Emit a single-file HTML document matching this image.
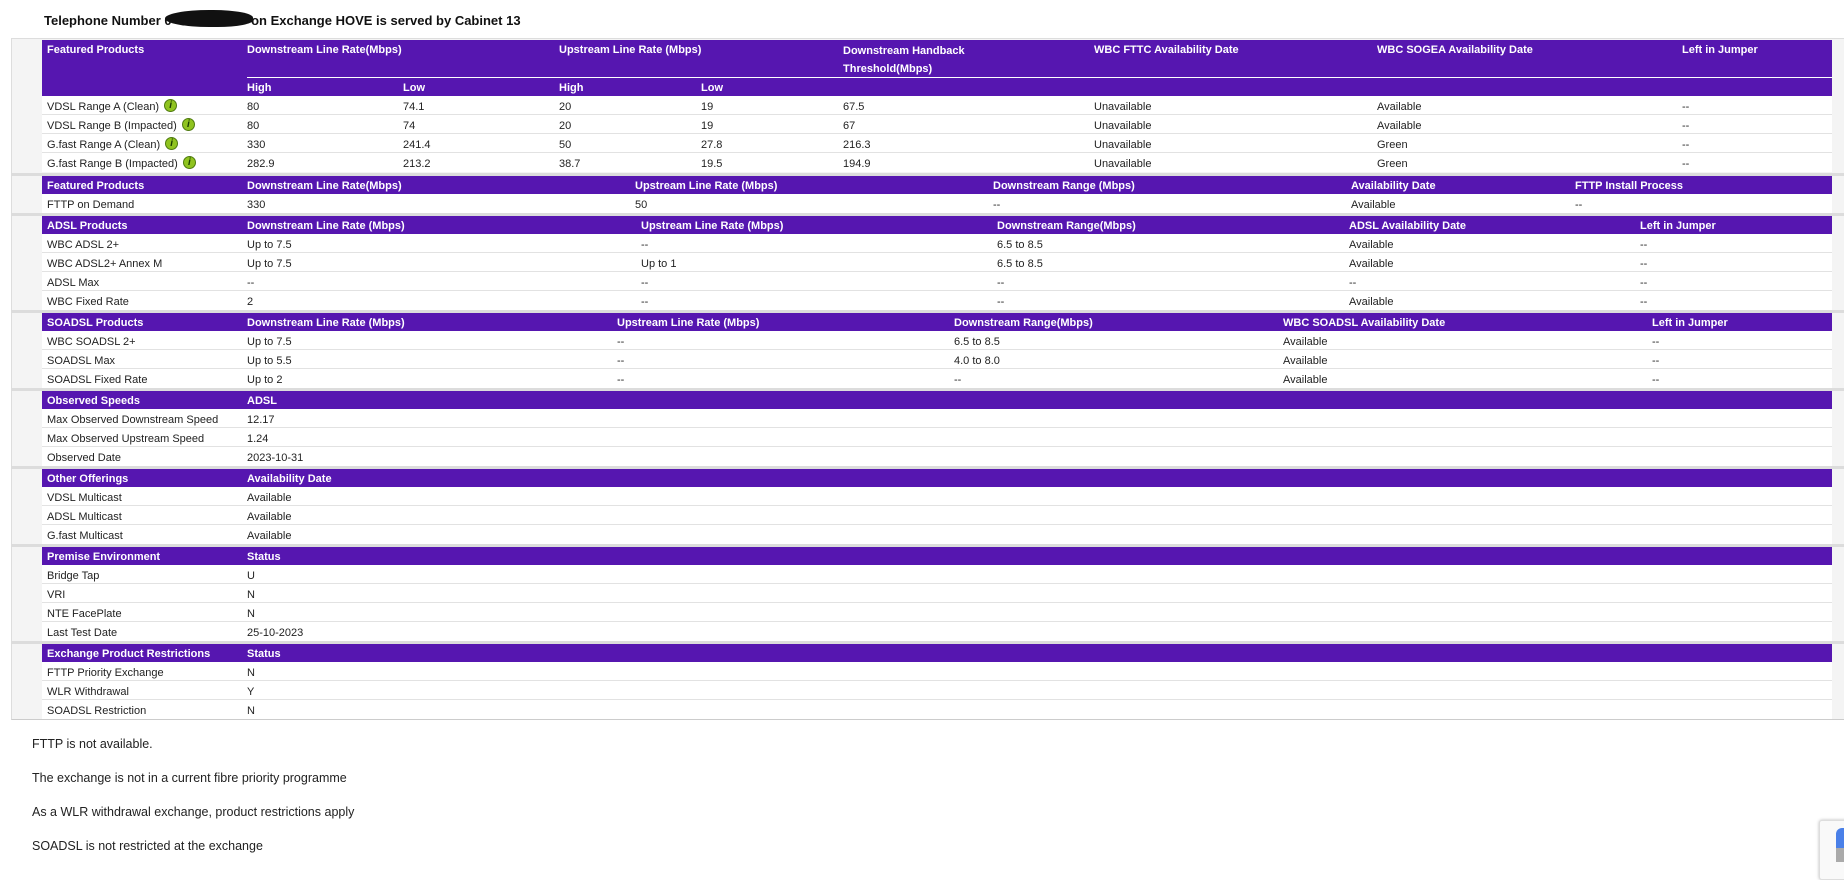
<!DOCTYPE html>
<html><head><meta charset="utf-8"><style>
*{margin:0;padding:0;box-sizing:border-box}
body{width:1844px;height:872px;background:#fff;position:relative;overflow:hidden;font-family:"Liberation Sans",Arial,sans-serif;color:#222;font-size:11px}
.title{position:absolute;left:44px;top:13px;font-weight:bold;font-size:13px;color:#111}
.blob{position:absolute;left:165px;top:10px;width:88px;height:17px;background:#111;border-radius:50% 45% 40% 50%}
.cont{position:absolute;left:11px;top:38px;width:1833px;height:682px;background:#f4f4f4;border-left:1px solid #ddd;border-top:1px solid #ddd;border-bottom:1px solid #ccc}
.sep{position:absolute;left:11px;width:1833px;height:3px;background:#dcdcdc}
.h{position:absolute;left:42px;width:1790px;height:18px;background:#5616b0;color:#fff;font-weight:bold}
.r{position:absolute;left:42px;width:1790px;height:19px;background:#fff;border-bottom:1px solid #e2e2e2}
.h span,.r span{position:absolute;top:2px;line-height:16px;white-space:nowrap}
.r span{top:3px;line-height:16px}
.i{display:inline-block;width:13px;height:13px;border-radius:50%;background:#8fc31f;border:1px solid #4f7a10;color:#1a3d00;font-size:10px;font-weight:bold;text-align:center;line-height:11px;vertical-align:middle;margin-left:2px;font-style:italic;margin-top:-3px}
.foot{position:absolute;left:32px;font-size:12.5px;color:#222}
</style></head><body>
<div class="title">Telephone Number 0&nbsp;&nbsp;&nbsp;&nbsp;&nbsp;&nbsp;&nbsp;&nbsp;&nbsp;&nbsp;&nbsp;&nbsp;&nbsp;&nbsp;&nbsp;&nbsp;&nbsp;&nbsp;&nbsp;&nbsp;&nbsp;&nbsp;on Exchange HOVE is served by Cabinet 13</div>
<div class="blob"></div>
<div class="cont"></div>

<div class="h" style="top:40px;height:37px"><span style="left:5px">Featured Products</span><span style="left:205px">Downstream Line Rate(Mbps)</span><span style="left:517px">Upstream Line Rate (Mbps)</span><span style="left:801px;line-height:18px">Downstream Handback<br>Threshold(Mbps)</span><span style="left:1052px">WBC FTTC Availability Date</span><span style="left:1335px">WBC SOGEA Availability Date</span><span style="left:1640px">Left in Jumper</span></div>
<div class="h" style="top:77px;height:19px"><div style="position:absolute;left:205px;right:0;top:0;height:1px;background:#fff"></div><span style="left:205px;top:3px">High</span><span style="left:361px;top:3px">Low</span><span style="left:517px;top:3px">High</span><span style="left:659px;top:3px">Low</span></div>
<div class="r" style="top:96px"><span style="left:5px">VDSL Range A (Clean) <i class="i">i</i></span><span style="left:205px">80</span><span style="left:361px">74.1</span><span style="left:517px">20</span><span style="left:659px">19</span><span style="left:801px">67.5</span><span style="left:1052px">Unavailable</span><span style="left:1335px">Available</span><span style="left:1640px">--</span></div>
<div class="r" style="top:115px"><span style="left:5px">VDSL Range B (Impacted) <i class="i">i</i></span><span style="left:205px">80</span><span style="left:361px">74</span><span style="left:517px">20</span><span style="left:659px">19</span><span style="left:801px">67</span><span style="left:1052px">Unavailable</span><span style="left:1335px">Available</span><span style="left:1640px">--</span></div>
<div class="r" style="top:134px"><span style="left:5px">G.fast Range A (Clean) <i class="i">i</i></span><span style="left:205px">330</span><span style="left:361px">241.4</span><span style="left:517px">50</span><span style="left:659px">27.8</span><span style="left:801px">216.3</span><span style="left:1052px">Unavailable</span><span style="left:1335px">Green</span><span style="left:1640px">--</span></div>
<div class="r" style="top:153px;border-bottom:none"><span style="left:5px">G.fast Range B (Impacted) <i class="i">i</i></span><span style="left:205px">282.9</span><span style="left:361px">213.2</span><span style="left:517px">38.7</span><span style="left:659px">19.5</span><span style="left:801px">194.9</span><span style="left:1052px">Unavailable</span><span style="left:1335px">Green</span><span style="left:1640px">--</span></div>
<div class="sep" style="top:173px"></div>

<div class="h" style="top:176px"><span style="left:5px">Featured Products</span><span style="left:205px">Downstream Line Rate(Mbps)</span><span style="left:593px">Upstream Line Rate (Mbps)</span><span style="left:951px">Downstream Range (Mbps)</span><span style="left:1309px">Availability Date</span><span style="left:1533px">FTTP Install Process</span></div>
<div class="r" style="top:194px;border-bottom:none"><span style="left:5px">FTTP on Demand</span><span style="left:205px">330</span><span style="left:593px">50</span><span style="left:951px">--</span><span style="left:1309px">Available</span><span style="left:1533px">--</span></div>
<div class="sep" style="top:213px"></div>

<div class="h" style="top:216px"><span style="left:5px">ADSL Products</span><span style="left:205px">Downstream Line Rate (Mbps)</span><span style="left:599px">Upstream Line Rate (Mbps)</span><span style="left:955px">Downstream Range(Mbps)</span><span style="left:1307px">ADSL Availability Date</span><span style="left:1598px">Left in Jumper</span></div>
<div class="r" style="top:234px"><span style="left:5px">WBC ADSL 2+</span><span style="left:205px">Up to 7.5</span><span style="left:599px">--</span><span style="left:955px">6.5 to 8.5</span><span style="left:1307px">Available</span><span style="left:1598px">--</span></div>
<div class="r" style="top:253px"><span style="left:5px">WBC ADSL2+ Annex M</span><span style="left:205px">Up to 7.5</span><span style="left:599px">Up to 1</span><span style="left:955px">6.5 to 8.5</span><span style="left:1307px">Available</span><span style="left:1598px">--</span></div>
<div class="r" style="top:272px"><span style="left:5px">ADSL Max</span><span style="left:205px">--</span><span style="left:599px">--</span><span style="left:955px">--</span><span style="left:1307px">--</span><span style="left:1598px">--</span></div>
<div class="r" style="top:291px;border-bottom:none"><span style="left:5px">WBC Fixed Rate</span><span style="left:205px">2</span><span style="left:599px">--</span><span style="left:955px">--</span><span style="left:1307px">Available</span><span style="left:1598px">--</span></div>
<div class="sep" style="top:310px"></div>

<div class="h" style="top:313px"><span style="left:5px">SOADSL Products</span><span style="left:205px">Downstream Line Rate (Mbps)</span><span style="left:575px">Upstream Line Rate (Mbps)</span><span style="left:912px">Downstream Range(Mbps)</span><span style="left:1241px">WBC SOADSL Availability Date</span><span style="left:1610px">Left in Jumper</span></div>
<div class="r" style="top:331px"><span style="left:5px">WBC SOADSL 2+</span><span style="left:205px">Up to 7.5</span><span style="left:575px">--</span><span style="left:912px">6.5 to 8.5</span><span style="left:1241px">Available</span><span style="left:1610px">--</span></div>
<div class="r" style="top:350px"><span style="left:5px">SOADSL Max</span><span style="left:205px">Up to 5.5</span><span style="left:575px">--</span><span style="left:912px">4.0 to 8.0</span><span style="left:1241px">Available</span><span style="left:1610px">--</span></div>
<div class="r" style="top:369px;border-bottom:none"><span style="left:5px">SOADSL Fixed Rate</span><span style="left:205px">Up to 2</span><span style="left:575px">--</span><span style="left:912px">--</span><span style="left:1241px">Available</span><span style="left:1610px">--</span></div>
<div class="sep" style="top:388px"></div>

<div class="h" style="top:391px"><span style="left:5px">Observed Speeds</span><span style="left:205px">ADSL</span></div>
<div class="r" style="top:409px"><span style="left:5px">Max Observed Downstream Speed</span><span style="left:205px">12.17</span></div>
<div class="r" style="top:428px"><span style="left:5px">Max Observed Upstream Speed</span><span style="left:205px">1.24</span></div>
<div class="r" style="top:447px;border-bottom:none"><span style="left:5px">Observed Date</span><span style="left:205px">2023-10-31</span></div>
<div class="sep" style="top:466px"></div>

<div class="h" style="top:469px"><span style="left:5px">Other Offerings</span><span style="left:205px">Availability Date</span></div>
<div class="r" style="top:487px"><span style="left:5px">VDSL Multicast</span><span style="left:205px">Available</span></div>
<div class="r" style="top:506px"><span style="left:5px">ADSL Multicast</span><span style="left:205px">Available</span></div>
<div class="r" style="top:525px;border-bottom:none"><span style="left:5px">G.fast Multicast</span><span style="left:205px">Available</span></div>
<div class="sep" style="top:544px"></div>

<div class="h" style="top:547px"><span style="left:5px">Premise Environment</span><span style="left:205px">Status</span></div>
<div class="r" style="top:565px"><span style="left:5px">Bridge Tap</span><span style="left:205px">U</span></div>
<div class="r" style="top:584px"><span style="left:5px">VRI</span><span style="left:205px">N</span></div>
<div class="r" style="top:603px"><span style="left:5px">NTE FacePlate</span><span style="left:205px">N</span></div>
<div class="r" style="top:622px;border-bottom:none"><span style="left:5px">Last Test Date</span><span style="left:205px">25-10-2023</span></div>
<div class="sep" style="top:641px"></div>

<div class="h" style="top:644px"><span style="left:5px">Exchange Product Restrictions</span><span style="left:205px">Status</span></div>
<div class="r" style="top:662px"><span style="left:5px">FTTP Priority Exchange</span><span style="left:205px">N</span></div>
<div class="r" style="top:681px"><span style="left:5px">WLR Withdrawal</span><span style="left:205px">Y</span></div>
<div class="r" style="top:700px;border-bottom:none"><span style="left:5px">SOADSL Restriction</span><span style="left:205px">N</span></div>

<div class="foot" style="top:737px">FTTP is not available.</div>
<div class="foot" style="top:771px">The exchange is not in a current fibre priority programme</div>
<div class="foot" style="top:805px">As a WLR withdrawal exchange, product restrictions apply</div>
<div class="foot" style="top:839px">SOADSL is not restricted at the exchange</div>

<div style="position:absolute;left:1819px;top:820px;width:30px;height:60px;background:#f9f9f9;border:1px solid #ddd;border-radius:3px;box-shadow:0 0 3px #bbb"></div>
<div style="position:absolute;left:1836px;top:828px;width:10px;height:20px;background:#4a80e8;border-radius:6px 0 0 0"></div>
<div style="position:absolute;left:1836px;top:848px;width:10px;height:14px;background:#aaa"></div>
</body></html>
